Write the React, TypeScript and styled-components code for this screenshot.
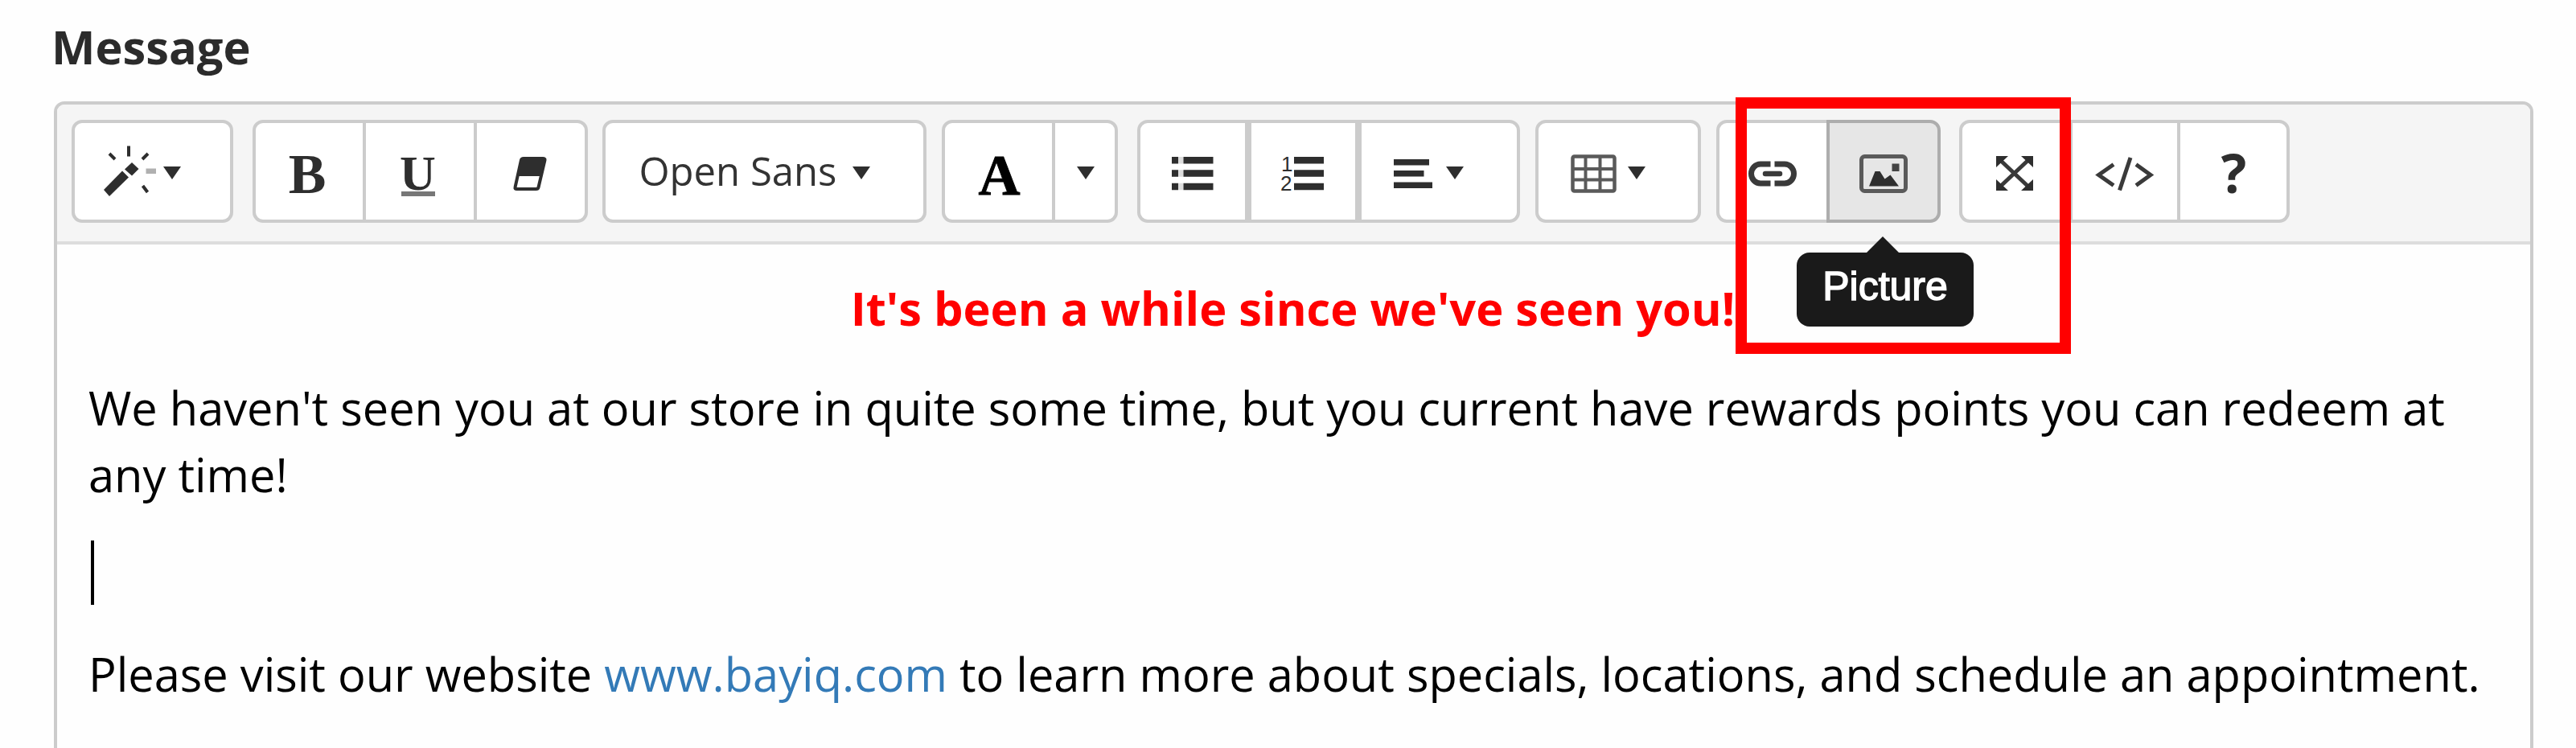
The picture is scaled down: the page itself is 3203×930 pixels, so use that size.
import React from 'react';
import styled, { createGlobalStyle, css } from 'styled-components';

const colors = {
  text: '#333',
  icon: '#2e2e2e',
  border: '#ccc',
  borderActive: '#adadad',
  toolbar: '#f5f5f5',
  link: '#337ab7',
  red: '#f00',
  tooltip: '#1a1a1a',
};

const GlobalStyle = createGlobalStyle`
  * {
    box-sizing: border-box;
  }

  body {
    margin: 0;
    overflow: hidden;
    background: #fefefe;
    font-family: 'Open Sans', sans-serif;
    font-size: 57.75px;
    line-height: 83px;
  }
`;

const Page = styled.div`
  display: flex;
  flex-direction: column;
  height: 930px;
  padding: 16px 53px 0 67px;
  overflow: hidden;
`;

const Label = styled.label`
  margin: 0 0 27px -3px;
  color: #2b2b2b;
  font-weight: 700;
`;

const Editor = styled.div`
  position: relative;
  flex: 1;
  border: 4px solid ${colors.border};
  border-bottom: 0;
  border-radius: 13px 13px 0 0;
`;

const Toolbar = styled.div`
  display: flex;
  height: 174px;
  padding: 19px 18px 0;
  border-bottom: 4px solid #ddd;
  border-radius: 9px 9px 0 0;
  background: ${colors.toolbar};
`;

const Button = styled.button<{ $width: number; $pad?: number; $active?: boolean }>`
  position: relative;
  display: flex;
  flex-shrink: 0;
  align-items: center;
  justify-content: ${p => (p.$pad ? 'flex-start' : 'center')};
  width: ${p => p.$width}px;
  height: 128px;
  padding: 0 0 0 ${p => p.$pad || 0}px;
  border: 4px solid ${colors.border};
  background: #fff;
  color: ${colors.text};
  font-family: inherit;
  font-size: 49px;
  line-height: 1;

  ${p => p.$active && css`
    z-index: 1;
    border-color: ${colors.borderActive};
    background: #e6e6e6;
  `}
`;

const Group = styled.div<{ $gap: number; $split?: boolean }>`
  display: flex;
  flex-shrink: 0;
  margin-right: ${p => p.$gap}px;

  ${Button} + ${Button} {
    margin-left: ${p => (p.$split ? 0 : -4)}px;
  }

  ${Button}:first-child {
    border-top-left-radius: 13px;
    border-bottom-left-radius: 13px;
  }

  ${Button}:last-child {
    border-top-right-radius: 13px;
    border-bottom-right-radius: 13px;
  }
`;

const Caret = styled.span<{ $space?: number }>`
  width: 0;
  margin: 4px 0 0 ${p => p.$space || 0}px;
  border: 11px solid transparent;
  border-top: 16px solid ${colors.icon};
  border-bottom: 0;
`;

const FontName = styled.span`
  padding-bottom: 1px;
`;

const Svg = styled.svg`
  display: block;
  flex-shrink: 0;
  margin-top: 5px;
  overflow: visible;
  fill: ${colors.icon};
`;

const Glyph = styled.text<{ $size: number; $sans?: boolean }>`
  font-family: ${p => (p.$sans ? "'Open Sans', sans-serif" : "'Liberation Serif', serif")};
  font-size: ${p => p.$size}px;
  font-weight: 700;
  text-anchor: middle;
`;

const Digit = styled.text`
  font-family: 'Liberation Sans', sans-serif;
  font-size: 26px;
`;

const Tooltip = styled.span`
  position: absolute;
  top: 161px;
  left: -41px;
  width: 220px;
  height: 92px;
  border-radius: 16px;
  background: ${colors.tooltip};
  color: #fff;
  font-family: 'Liberation Sans', sans-serif;
  font-size: 50px;
  line-height: 84px;
  text-align: center;
  -webkit-text-stroke: 1.5px #fff;

  &::before {
    position: absolute;
    top: -20px;
    left: 87px;
    border: 20.5px solid transparent;
    border-top: 0;
    border-bottom: 20px solid ${colors.tooltip};
    content: '';
  }
`;

const Content = styled.div`
  padding: 37px 41px 0 39px;
  color: #000;
`;

const Paragraph = styled.p`
  min-height: 83px;
  margin: 0 0 41px;
`;

const Headline = styled(Paragraph)`
  color: ${colors.red};
  font-weight: 700;
  text-align: center;
`;

const Cursor = styled.span`
  display: block;
  width: 4px;
  height: 80px;
  margin: 0 0 0 3px;
  background: #000;
`;

const Link = styled.a`
  color: ${colors.link};
  text-decoration: none;
`;

const Highlight = styled.div`
  position: absolute;
  top: -9px;
  left: 2087px;
  z-index: 2;
  width: 417px;
  height: 319px;
  border: 14px solid ${colors.red};
`;

const MagicIcon = () => (
  <Svg width="72" height="69">
    <path d="M2 55 25 31.5 33 39.5 9 63z" />
    <path d="M28 29.5 37 21 45.5 29 37 37.5z" />
    <path d="M33 .5v13M9 10l7 7M57 10l-7 7M50.5 50l6 8" stroke={colors.icon} strokeWidth="4" />
    <path d="M54.5 28.5h12.5v6.5h-12.5z" fill="#b0b0b0" />
  </Svg>
);

const BoldIcon = () => (
  <Svg width="46" height="54">
    <Glyph x="20" y="50.5" $size={70}>B</Glyph>
  </Svg>
);

const UnderlineIcon = () => (
  <Svg width="48" height="60">
    <Glyph x="21.5" y="50" $size={62}>U</Glyph>
    <path d="M1 52h42v6H1z" fill="#777" />
  </Svg>
);

const EraserIcon = () => (
  <Svg width="45" height="44">
    <path
      d="M13 3h24q3 0 2.500 2l-8 34q-.5 2-3 2H4.500q-2.500 0-2-2L10 5q.5-2 3-2z"
      fill="none"
      stroke={colors.icon}
      strokeWidth="4"
    />
    <path d="M11 2h29l-5.500 23H6z" />
  </Svg>
);

const FontColorIcon = () => (
  <Svg width="52" height="54">
    <Glyph x="26.5" y="52.5" $size={72} fill="#000" stroke="#000" strokeWidth="1">A</Glyph>
  </Svg>
);

const Bars = ({ x }: { x: number }) => (
  <path d={`M${x} 0h37v8.5H${x}zM${x} 16.3h37v8.5H${x}zM${x} 32.7h37v8.5H${x}z`} />
);

const BulletIcon = () => (
  <Svg width="52" height="42">
    <path d="M0 0h8v8.5H0zM0 16.3h8v8.5H0zM0 32.7h8v8.5H0z" />
    <path d="M8 0h6.5v8.5H8zM8 16.3h6.5v8.5H8zM8 32.7h6.5v8.5H8z" fill="#ddd" />
    <Bars x={14.5} />
  </Svg>
);

const NumberIcon = () => (
  <Svg width="56" height="42">
    <Digit x="0" y="18">1</Digit>
    <Digit x="-1" y="42">2</Digit>
    <Bars x={16} />
  </Svg>
);

const AlignIcon = () => (
  <Svg width="50" height="36">
    <path d="M2 0h44v7.5H2zM2 14h37.5v7.5H2zM2 28.5h48V36H2z" />
  </Svg>
);

const TableIcon = () => (
  <Svg width="60" height="48">
    <rect x="4.5" y="2.5" width="52" height="43" rx="2" fill="none" stroke="#5a5a5a" strokeWidth="4.5" />
    <path d="M20.5 3v42M38.5 3v42M4 18h53M4 31.5h53" stroke="#5a5a5a" strokeWidth="4" />
  </Svg>
);

const LinkIcon = () => (
  <Svg width="60" height="32" stroke="#3a3a3a" strokeWidth="7">
    <path d="M27.5 4H15a11.5 12 0 0 0 0 24h12.5M32.5 4H45a11.5 12 0 0 1 0 24H32.5" fill="none" />
    <path d="M21 16h18" strokeWidth="6.5" strokeLinecap="round" />
  </Svg>
);

const PictureIcon = () => (
  <Svg width="60" height="48">
    <rect x="2.5" y="2.5" width="55" height="43" rx="4" fill="none" stroke="#5a5a5a" strokeWidth="5" />
    <path d="M12 39.5 19.5 21h6l6 9.5 7-5 10.5 14z" />
    <path d="M40.5 11.5h9V21h-9z" fill="#444" />
  </Svg>
);

const FullscreenIcon = () => (
  <Svg width="50" height="43">
    <path d="M5 5 40 38M40 5 5 38" stroke="#3a3a3a" strokeWidth="5" />
    <path d="M0 0h15L0 14zM46 0H31l15 14zM0 43h15L0 29zM46 43H31l15-14z" />
  </Svg>
);

const CodeIcon = () => (
  <Svg width="72" height="42">
    <path
      d="M22 9.5 3.5 22.5 22 35.5M50 9.5 68 22.5 50 35.5M29.5 41.5 43 1"
      fill="none"
      stroke="#3a3a3a"
      strokeWidth="5"
    />
  </Svg>
);

const HelpIcon = () => (
  <Svg width="34" height="50">
    <Glyph x="17.5" y="49" $size={66} $sans>?</Glyph>
  </Svg>
);

export default function App() {
  return (
    <>
      <GlobalStyle />
      <Page>
        <Label>Message</Label>
        <Editor>
          <Toolbar>
            <Group $gap={24}>
              <Button type="button" $width={201} $pad={34}>
                <MagicIcon />
                <Caret $space={4} />
              </Button>
            </Group>
            <Group $gap={17.5}>
              <Button type="button" $width={141}><BoldIcon /></Button>
              <Button type="button" $width={142}><UnderlineIcon /></Button>
              <Button type="button" $width={142}><EraserIcon /></Button>
            </Group>
            <Group $gap={19}>
              <Button type="button" $width={403.5} $pad={42}>
                <FontName>Open Sans</FontName>
                <Caret $space={20} />
              </Button>
            </Group>
            <Group $gap={24}>
              <Button type="button" $width={141}><FontColorIcon /></Button>
              <Button type="button" $width={82}><Caret $space={2} /></Button>
            </Group>
            <Group $gap={19} $split>
              <Button type="button" $width={138}><BulletIcon /></Button>
              <Button type="button" $width={137}><NumberIcon /></Button>
              <Button type="button" $width={201} $pad={38}>
                <AlignIcon />
                <Caret $space={17} />
              </Button>
            </Group>
            <Group $gap={18.5}>
              <Button type="button" $width={206} $pad={38}>
                <TableIcon />
                <Caret $space={13} />
              </Button>
            </Group>
            <Group $gap={23}>
              <Button type="button" $width={141.5}><LinkIcon /></Button>
              <Button type="button" $width={142} $active>
                <PictureIcon />
                <Tooltip>Picture</Tooltip>
              </Button>
            </Group>
            <Group $gap={0}>
              <Button type="button" $width={141}><FullscreenIcon /></Button>
              <Button type="button" $width={138}><CodeIcon /></Button>
              <Button type="button" $width={140}><HelpIcon /></Button>
            </Group>
          </Toolbar>
          <Content>
            <Headline>It&apos;s been a while since we&apos;ve seen you!</Headline>
            <Paragraph>
              We haven&apos;t seen you at our store in quite some time, but you current have rewards points you can redeem at any time!
            </Paragraph>
            <Paragraph><Cursor /></Paragraph>
            <Paragraph>
              Please visit our website <Link>www.bayiq.com</Link> to learn more about specials, locations, and schedule an appointment.
            </Paragraph>
          </Content>
          <Highlight />
        </Editor>
      </Page>
    </>
  );
}
